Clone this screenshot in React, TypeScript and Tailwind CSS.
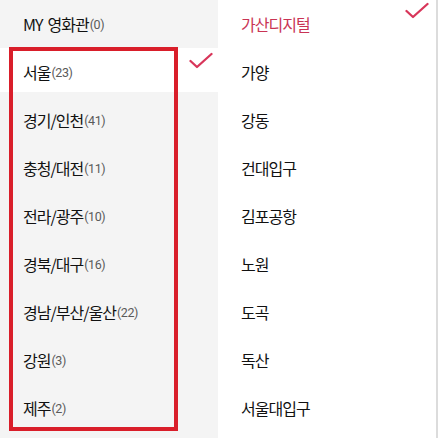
import React from "react";

const regions = [
  { name: "MY 영화관", count: 0 },
  { name: "서울", count: 23, selected: true },
  { name: "경기/인천", count: 41 },
  { name: "충청/대전", count: 11 },
  { name: "전라/광주", count: 10 },
  { name: "경북/대구", count: 16 },
  { name: "경남/부산/울산", count: 22 },
  { name: "강원", count: 3 },
  { name: "제주", count: 2 },
];

const theaters = [
  { name: "가산디지털", selected: true },
  { name: "가양" },
  { name: "강동" },
  { name: "건대입구" },
  { name: "김포공항" },
  { name: "노원" },
  { name: "도곡" },
  { name: "독산" },
  { name: "서울대입구" },
];

function Check() {
  return (
    <svg width="24" height="17" viewBox="0 0 24 17" fill="none">
      <polyline
        points="1.5,9 8,15 22.5,2"
        stroke="#d8365a"
        strokeWidth="2.3"
        strokeLinecap="round"
        strokeLinejoin="round"
      />
    </svg>
  );
}

const kr = { fontFamily: '"Noto Sans CJK KR", "Noto Sans", sans-serif' };

export default function App() {
  return (
    <div className="relative w-[438px] h-[438px] overflow-hidden bg-white flex">
      <div className="w-[218px] h-full bg-[#f4f4f4] flex flex-col gap-[4px]">
        {regions.map((r) => {
          const parts = r.name.split(" ");
          return (
            <div
              key={r.name}
              className={`relative h-[44px] shrink-0 flex items-center pl-[23px] ${r.selected ? "bg-white" : ""}`}
            >
              <span className="flex gap-[5px] text-[16px] font-normal tracking-[-1px] text-[#111] leading-none pt-[3px]" style={kr}>
                {parts.map((p) => (
                  <span key={p}>{p}</span>
                ))}
              </span>
              <span
                className="text-[12.5px] text-[#5a5a5a] leading-none pt-[6px] tracking-[-0.4px] ml-[1px]"
                style={{ fontFamily: 'Roboto, "Liberation Sans", sans-serif' }}
              >
                ({r.count})
              </span>
              {r.selected && (
                <span className="absolute left-[189px] top-[4px]">
                  <Check />
                </span>
              )}
            </div>
          );
        })}
      </div>
      <div className="flex-1 h-full flex flex-col gap-[4px]">
        {theaters.map((t) => (
          <div key={t.name} className="relative h-[44px] shrink-0 flex items-center pl-[23px]">
            <span
              className={`text-[16px] font-normal tracking-[-1px] leading-none pt-[3px] ${t.selected ? "text-[#c93454]" : "text-[#111]"}`}
              style={kr}
            >
              {t.name}
            </span>
            {t.selected && (
              <span className="absolute left-[187px] top-[2px]">
                <Check />
              </span>
            )}
          </div>
        ))}
      </div>
      <div className="w-[2px] h-full bg-[#dcdcdc]" />
      <div className="absolute left-[9px] top-[47px] w-[169px] h-[384px] border-[4px] border-[#d91e2a] pointer-events-none" />
    </div>
  );
}
